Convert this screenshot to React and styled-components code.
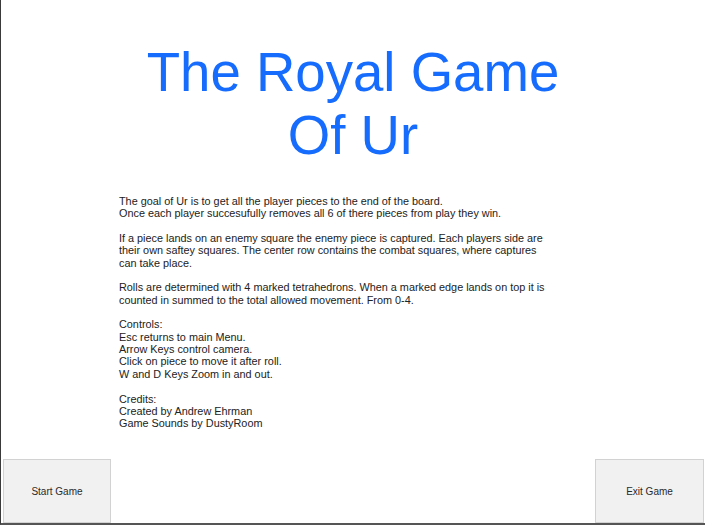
import styled, { createGlobalStyle } from "styled-components";

const GlobalStyle = createGlobalStyle`
  html, body {
    margin: 0;
    padding: 0;
    background: #ffffff;
  }
  body {
    font-family: "Liberation Sans", Arial, sans-serif;
  }
`;

const StyledScreen = styled.div`
  box-sizing: border-box;
  width: 705px;
  height: 525px;
  display: flex;
  flex-direction: column;
  border-left: 1px solid #3a3a3a;
  border-bottom: 2px solid #555555;
  background: #ffffff;
  overflow: hidden;
`;

const StyledTitle = styled.h1`
  margin: 0;
  padding-top: 41px;
  text-align: center;
  font-family: "Liberation Sans", Arial, sans-serif;
  font-weight: 400;
  font-size: 54.6px;
  line-height: 63px;
  color: #166cfc;
`;

const StyledRules = styled.div`
  margin: 28px 0 0 118px;
  width: 432px;
  font-size: 10.85px;
  line-height: 12.35px;
  color: #222222;
`;

const StyledParagraph = styled.p`
  margin: 0 0 12.35px;
`;

const StyledFooter = styled.div`
  margin-top: auto;
  display: flex;
  justify-content: space-between;
  padding: 0 1px 0 2px;
`;

const StyledButton = styled.button`
  box-sizing: border-box;
  width: ${(p) => p.$width}px;
  height: 64px;
  background: #f1f1f1;
  border: 1px solid #d2d2d2;
  border-radius: 0;
  font-family: "Liberation Sans", Arial, sans-serif;
  font-size: 10px;
  color: #2a2a2a;
  padding: 0;
  cursor: pointer;
`;

const paragraphs = [
  [
    "The goal of Ur is to get all the player pieces to the end of the board.",
    "Once each player succesufully removes all 6 of there pieces from play they win.",
  ],
  [
    "If a piece lands on an enemy square the enemy piece is captured. Each players side are their own saftey squares. The center row contains the combat squares, where captures can take place.",
  ],
  [
    "Rolls are determined with 4 marked tetrahedrons. When a marked edge lands on top it is counted in summed to the total allowed movement. From 0-4.",
  ],
  [
    "Controls:",
    "Esc returns to main Menu.",
    "Arrow Keys control camera.",
    "Click on piece to move it after roll.",
    "W and D Keys Zoom in and out.",
  ],
  ["Credits:", "Created by Andrew Ehrman", "Game Sounds by DustyRoom"],
];

const App = () => {
  return (
    <>
      <GlobalStyle />
      <StyledScreen>
        <StyledTitle>
          The Royal Game
          <br />
          Of Ur
        </StyledTitle>
        <StyledRules>
          {paragraphs.map((lines, i) => (
            <StyledParagraph key={i}>
              {lines.map((line, j) => (
                <span key={j}>
                  {line}
                  {j < lines.length - 1 && <br />}
                </span>
              ))}
            </StyledParagraph>
          ))}
        </StyledRules>
        <StyledFooter>
          <StyledButton $width={108}>Start Game</StyledButton>
          <StyledButton $width={109}>Exit Game</StyledButton>
        </StyledFooter>
      </StyledScreen>
    </>
  );
};

export default App;
